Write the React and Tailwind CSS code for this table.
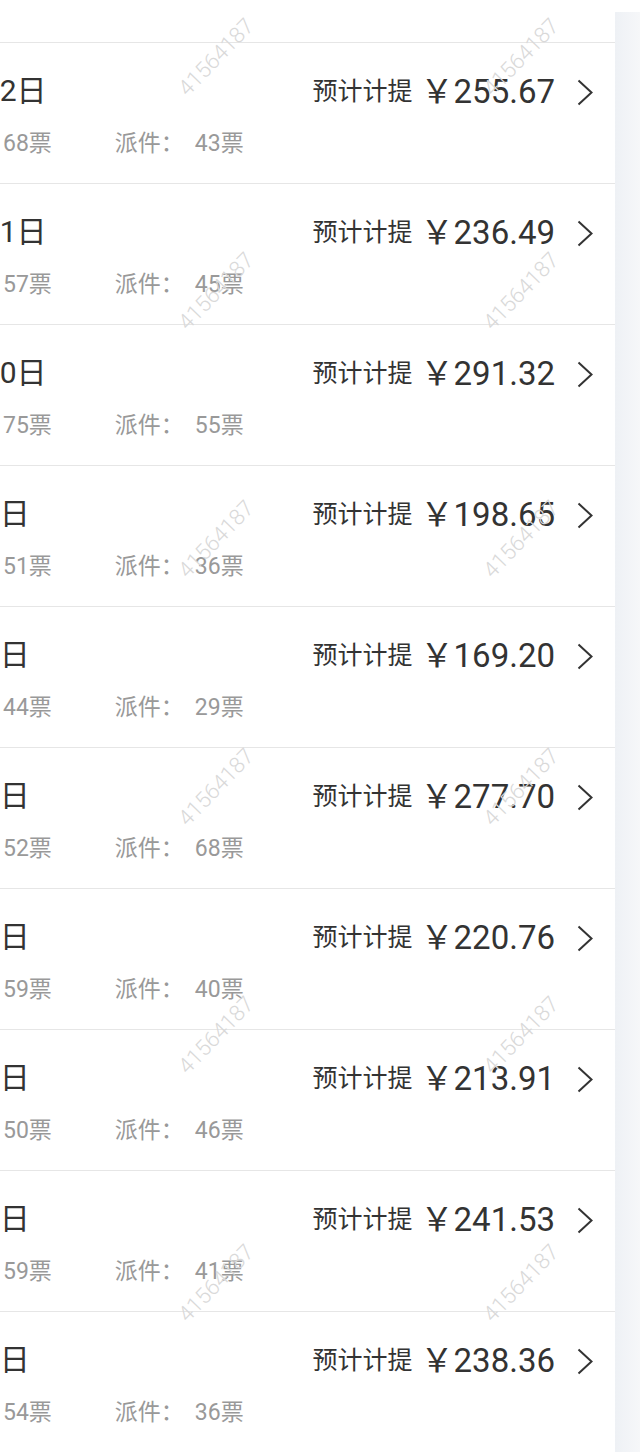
import React from 'react'

const rows = [
  { date: '2月22日', pickup: 68, deliver: 43, amount: '255.67' },
  { date: '2月21日', pickup: 57, deliver: 45, amount: '236.49' },
  { date: '2月20日', pickup: 75, deliver: 55, amount: '291.32' },
  { date: '2月9日', pickup: 51, deliver: 36, amount: '198.65' },
  { date: '2月8日', pickup: 44, deliver: 29, amount: '169.20' },
  { date: '2月7日', pickup: 52, deliver: 68, amount: '277.70' },
  { date: '2月6日', pickup: 59, deliver: 40, amount: '220.76' },
  { date: '2月5日', pickup: 50, deliver: 46, amount: '213.91' },
  { date: '2月4日', pickup: 59, deliver: 41, amount: '241.53' },
  { date: '2月3日', pickup: 54, deliver: 36, amount: '238.36' },
]

// watermark spots, centre of the text
const marks = [
  'left-[216px] top-[57px]', 'left-[521px] top-[57px]',
  'left-[216px] top-[291px]', 'left-[521px] top-[291px]',
  'left-[216px] top-[539px]', 'left-[521px] top-[539px]',
  'left-[216px] top-[787px]', 'left-[521px] top-[787px]',
  'left-[216px] top-[1035px]', 'left-[521px] top-[1035px]',
  'left-[216px] top-[1283px]', 'left-[521px] top-[1283px]',
]

const Chevron = () => (
  <svg width="16" height="27" viewBox="0 0 16 27" fill="none" className="ml-[22px] shrink-0">
    <polyline points="1.5,1.5 14.5,13.5 1.5,25.5" stroke="#333" strokeWidth="2" strokeLinejoin="miter" />
  </svg>
)

const Row = ({ row }) => (
  <div className="h-[141px] flex items-start pt-[30px] pr-[22px] border-b-[1.5px] border-[#e6e6e6]">
    <div className="flex flex-col whitespace-nowrap">
      <div className="-ml-[64px] h-[36px] leading-[36px] text-[30px] text-[#333]">{row.date}</div>
      <div className="-ml-[77px] mt-[20px] h-[30px] leading-[30px] text-[23px] text-[#999] flex">
        <span>揽件：</span>
        <span className="ml-[11px]">{row.pickup}票</span>
        <span className="ml-[63px]">派件：</span>
        <span className="ml-[11px]">{row.deliver}票</span>
      </div>
    </div>
    <div className="ml-auto h-[36px] mt-[1px] flex items-center whitespace-nowrap text-[#333]">
      <span className="text-[25px]">预计计提</span>
      <span className="ml-[8px] text-[33px] leading-[36px]">￥{row.amount}</span>
      <Chevron />
    </div>
  </div>
)

export default function App() {
  return (
    <div
      className="relative w-[640px] h-[1452px] overflow-hidden bg-white flex flex-col"
      style={{ fontFamily: "Roboto, 'Noto Sans CJK SC', sans-serif" }}
    >
      <div className="h-[12px] shrink-0 bg-white" />
      <div className="flex flex-1">
        <div className="w-[615px] shrink-0 bg-white">
          <div className="h-[31px] border-b-[1.5px] border-[#e6e6e6]" />
          {rows.map((r, i) => (
            <Row key={i} row={r} />
          ))}
        </div>
        <div className="flex-1 bg-gradient-to-r from-[#eef1f5] to-[#f6f7f9]" />
      </div>

      {marks.map((m, i) => (
        <span
          key={i}
          className={`absolute ${m} -translate-x-1/2 -translate-y-1/2 -rotate-[46deg] text-[22px] font-light text-[#d9d9d9] pointer-events-none select-none`}
        >
          41564187
        </span>
      ))}
    </div>
  )
}
